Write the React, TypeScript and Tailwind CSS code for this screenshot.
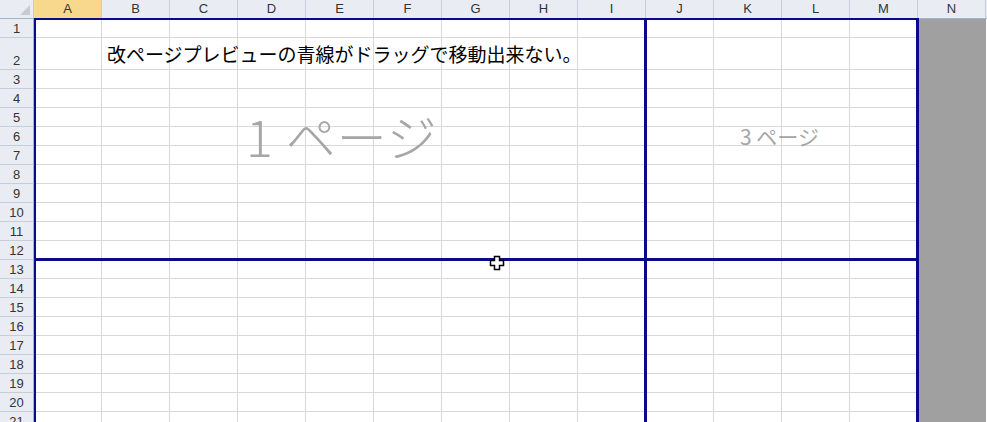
import React from "react";

const cols = ["A","B","C","D","E","F","G","H","I","J","K","L","M","N"];
const rowH = (r: number) => (r === 2 ? 32 : 19);
const rows = Array.from({ length: 21 }, (_, i) => i + 1);

export default function App() {
  const font = { fontFamily: '"Liberation Sans", "Noto Sans CJK JP", sans-serif' };
  return (
    <div className="relative w-[987px] h-[422px] overflow-hidden bg-white" style={font}>
      <div className="flex h-[19px] bg-[#e9edf3] border-b border-[#9eb6ce]">
        <div className="w-[34px] shrink-0 border-r border-[#c5cdd8] relative">
          <div className="absolute right-[3px] bottom-[3px] w-0 h-0 border-l-[10px] border-l-transparent border-b-[10px] border-b-[#c8ccd2]" />
        </div>
        {cols.map((c) => (
          <div key={c} className={`w-[68px] shrink-0 border-r border-[#c5cdd8] text-[13px] text-[#333] flex items-center justify-center ${c === "A" ? "bg-[#f8d88c]" : ""}`}>{c}</div>
        ))}
      </div>
      {rows.map((r) => (
        <div key={r} className="flex" style={{ height: rowH(r) }}>
          <div className="w-[34px] shrink-0 bg-[#e9edf3] border-r border-[#9eb6ce] border-b border-b-[#c5cdd8] text-[13px] leading-[17px] text-[#333] flex items-end justify-center">{r}</div>
          {cols.map((c) => (
            <div key={c} className={`w-[68px] shrink-0 border-r border-b ${c === "N" ? "bg-[#a0a0a0] border-[#a0a0a0]" : "border-[#d8d8d8]"}`} />
          ))}
        </div>
      ))}
      <div className="absolute left-[107px] top-[40px] text-[19px] text-black" style={{ fontFamily: '"Noto Sans CJK JP", sans-serif' }}>改ページプレビューの青線がドラッグで移動出来ない。</div>
      <div className="absolute left-[246px] top-[98px] text-[50px] font-light text-[#a6a6a6] tracking-[1px]" style={{ fontFamily: '"Noto Sans CJK JP", sans-serif' }}>1 ページ</div>
      <div className="absolute left-[740px] top-[121px] text-[21px] text-[#a6a6a6]" style={{ fontFamily: '"Noto Sans CJK JP", sans-serif' }}>3 ページ</div>
      <div className="absolute left-[34px] top-[18px] w-[884px] h-[2px] bg-[#0a0a8a]" />
      <div className="absolute left-[34px] top-[18px] w-[2px] h-[404px] bg-[#0a0a8a]" />
      <div className="absolute left-[916px] top-[18px] w-[3px] h-[404px] bg-[#0a0a8a]" />
      <div className="absolute left-[644px] top-[18px] w-[3px] h-[404px] bg-[#0a0a8a]" />
      <div className="absolute left-[34px] top-[258px] w-[884px] h-[3px] bg-[#0a0a8a]" />
      <svg className="absolute left-[489px] top-[255px]" width="16" height="16" viewBox="0 0 16 16">
        <path d="M5.5 1.5h5v4h4v5h-4v4h-5v-4h-4v-5h4z" fill="white" stroke="black" strokeWidth="1.5" />
      </svg>
    </div>
  );
}
